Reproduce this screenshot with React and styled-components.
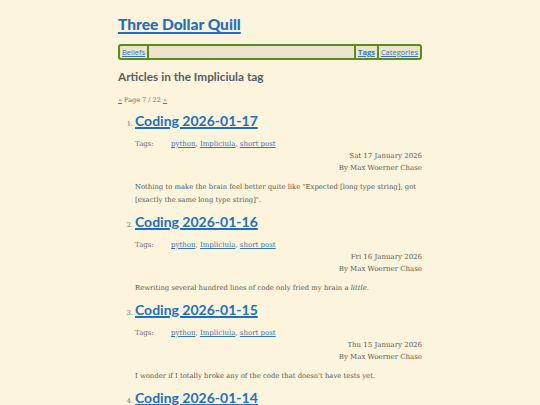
import React from "react";
import styled, { createGlobalStyle } from "styled-components";

const Global = createGlobalStyle`
  html, body { margin: 0; padding: 0; background: #fcf4dc; }
  body { font-family: "DejaVu Serif", serif; color: #5a5a55; }
`;

const Page = styled.div`
  width: 304px;
  margin: 0 auto;
  padding-top: 12px;
`;

const SiteTitle = styled.h1`
  margin: 0 0 8px 0;
  font-family: Lato, sans-serif;
  font-weight: 900;
  font-size: 15.5px;
  line-height: 24px;
  a { color: #1f6fbf; text-decoration: underline; text-decoration-thickness: 2px; text-underline-offset: 2px; }
`;

const Nav = styled.nav`
  display: flex;
  align-items: stretch;
  height: 12px;
  border: 2px solid #5c8c1c;
  border-radius: 3px;
  background: #ece4ce;
  font-family: "Open Sans", sans-serif;
  font-size: 7.5px;
  line-height: 12px;
`;

const NavLink = styled.a`
  color: #3a74b4;
  text-decoration: underline;
  font-weight: ${(p) => (p.$active ? 700 : 400)};
  padding: 0 2px;
  ${(p) => (p.$sepRight ? "border-right: 2px solid #5c8c1c;" : "")}
  ${(p) => (p.$sepLeft ? "border-left: 2px solid #5c8c1c;" : "")}
`;

const Spacer = styled.div`
  flex: 1;
`;

const Heading = styled.h2`
  margin: 8px 0 0 0;
  font-family: Lato, sans-serif;
  font-weight: 700;
  font-size: 11.8px;
  line-height: 18px;
  color: #565e63;
`;

const Pager = styled.div`
  margin-top: 9px;
  font-size: 6.5px;
  line-height: 10px;
  color: #6a6a66;
  a { color: #3a74b4; }
`;

const List = styled.ol`
  margin: 7px 0 0 0;
  padding-left: 17px;
`;

const Item = styled.li`
  font-size: 6.5px;
  color: #66665f;
  margin-bottom: 6px;
  &::marker { font-size: 6.5px; }
`;

const ItemTitle = styled.h3`
  display: inline;
  font-family: Lato, sans-serif;
  font-weight: 700;
  font-size: 14px;
  line-height: 18px;
  a { color: #1f6fbf; text-decoration: underline; text-decoration-thickness: 1.5px; }
`;

const Meta = styled.div`
  margin-top: 8px;
  font-size: 7px;
  line-height: 12px;
`;

const TagRow = styled.div`
  display: flex;
`;

const TagLabel = styled.span`
  width: 36px;
  color: #6a6a66;
`;

const TagLink = styled.a`
  color: #3a74b4;
  text-decoration: underline;
`;

const RightLine = styled.div`
  text-align: right;
  color: #5a5a55;
`;

const Body = styled.p`
  margin: 7px 0 0 0;
  font-size: 6.85px;
  line-height: 13px;
  color: #58584f;
`;

const posts = [
  {
    title: "Coding 2026-01-17",
    date: "Sat 17 January 2026",
    body: (
      <>Nothing to make the brain feel better quite like "Expected [long type string], got [exactly the same long type string]".</>
    ),
  },
  {
    title: "Coding 2026-01-16",
    date: "Fri 16 January 2026",
    body: (
      <>Rewriting several hundred lines of code only fried my brain a <em>little</em>.</>
    ),
  },
  {
    title: "Coding 2026-01-15",
    date: "Thu 15 January 2026",
    body: <>I wonder if I totally broke any of the code that doesn't have tests yet.</>,
  },
  {
    title: "Coding 2026-01-14",
    date: "Wed 14 January 2026",
    body: <>More code.</>,
  },
];

export default function App() {
  return (
    <>
      <Global />
      <Page>
        <SiteTitle>
          <a href="#">Three Dollar Quill</a>
        </SiteTitle>
        <Nav>
          <NavLink href="#" $sepRight>Beliefs</NavLink>
          <Spacer />
          <NavLink href="#" $sepLeft $active>Tags</NavLink>
          <NavLink href="#" $sepLeft>Categories</NavLink>
        </Nav>
        <Heading>Articles in the Impliciula tag</Heading>
        <Pager>
          <a href="#">«</a> Page 7 / 22 <a href="#">»</a>
        </Pager>
        <List start={1}>
          {posts.map((p) => (
            <Item key={p.title}>
              <ItemTitle>
                <a href="#">{p.title}</a>
              </ItemTitle>
              <Meta>
                <TagRow>
                  <TagLabel>Tags:</TagLabel>
                  <span>
                    <TagLink href="#">python</TagLink>, <TagLink href="#">Impliciula</TagLink>,{" "}
                    <TagLink href="#">short post</TagLink>
                  </span>
                </TagRow>
                <RightLine>{p.date}</RightLine>
                <RightLine>By Max Woerner Chase</RightLine>
              </Meta>
              <Body>{p.body}</Body>
            </Item>
          ))}
        </List>
      </Page>
    </>
  );
}
